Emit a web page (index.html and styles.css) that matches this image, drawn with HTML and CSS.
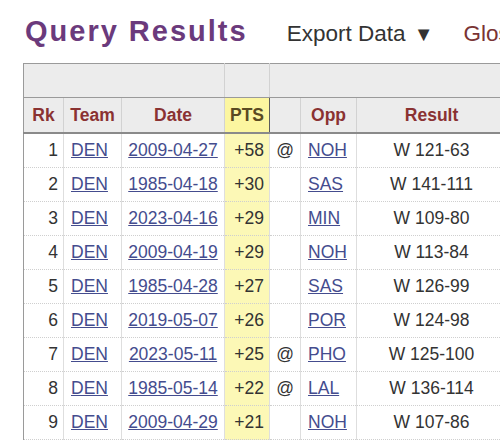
FILE: index.html
```html
<!DOCTYPE html>
<html>
<head>
<meta charset="utf-8">
<link rel="stylesheet" href="styles.css">
</head>
<body>
<div class="page">
  <div class="heading">
    <h1 class="title">Query Results</h1>
    <span class="export">Export Data <span class="caret">▼</span></span>
    <span class="glossary">Glossary</span>
  </div>
  <table class="results">
    <colgroup>
      <col class="c-rk"><col class="c-team"><col class="c-date"><col class="c-pts"><col class="c-at"><col class="c-opp"><col class="c-res">
    </colgroup>
    <thead>
      <tr class="over">
        <th colspan="3"></th>
        <th></th>
        <th colspan="3"></th>
      </tr>
      <tr class="labels">
        <th>Rk</th><th>Team</th><th>Date</th><th class="sorted">PTS</th><th></th><th>Opp</th><th>Result</th>
      </tr>
    </thead>
    <tbody>
      <tr><td class="num">1</td><td class="left"><a href="#">DEN</a></td><td class="center"><a href="#">2009-04-27</a></td><td class="num pts">+58</td><td class="center">@</td><td class="left"><a href="#">NOH</a></td><td class="center">W 121-63</td></tr>
      <tr><td class="num">2</td><td class="left"><a href="#">DEN</a></td><td class="center"><a href="#">1985-04-18</a></td><td class="num pts">+30</td><td class="center"></td><td class="left"><a href="#">SAS</a></td><td class="center">W 141-111</td></tr>
      <tr><td class="num">3</td><td class="left"><a href="#">DEN</a></td><td class="center"><a href="#">2023-04-16</a></td><td class="num pts">+29</td><td class="center"></td><td class="left"><a href="#">MIN</a></td><td class="center">W 109-80</td></tr>
      <tr><td class="num">4</td><td class="left"><a href="#">DEN</a></td><td class="center"><a href="#">2009-04-19</a></td><td class="num pts">+29</td><td class="center"></td><td class="left"><a href="#">NOH</a></td><td class="center">W 113-84</td></tr>
      <tr><td class="num">5</td><td class="left"><a href="#">DEN</a></td><td class="center"><a href="#">1985-04-28</a></td><td class="num pts">+27</td><td class="center"></td><td class="left"><a href="#">SAS</a></td><td class="center">W 126-99</td></tr>
      <tr><td class="num">6</td><td class="left"><a href="#">DEN</a></td><td class="center"><a href="#">2019-05-07</a></td><td class="num pts">+26</td><td class="center"></td><td class="left"><a href="#">POR</a></td><td class="center">W 124-98</td></tr>
      <tr><td class="num">7</td><td class="left"><a href="#">DEN</a></td><td class="center"><a href="#">2023-05-11</a></td><td class="num pts">+25</td><td class="center">@</td><td class="left"><a href="#">PHO</a></td><td class="center">W 125-100</td></tr>
      <tr><td class="num">8</td><td class="left"><a href="#">DEN</a></td><td class="center"><a href="#">1985-05-14</a></td><td class="num pts">+22</td><td class="center">@</td><td class="left"><a href="#">LAL</a></td><td class="center">W 136-114</td></tr>
      <tr><td class="num">9</td><td class="left"><a href="#">DEN</a></td><td class="center"><a href="#">2009-04-29</a></td><td class="num pts">+21</td><td class="center"></td><td class="left"><a href="#">NOH</a></td><td class="center">W 107-86</td></tr>
    </tbody>
  </table>
</div>
</body>
</html>
```

FILE: styles.css
```css
html, body {
  margin: 0;
  padding: 0;
  background: #ffffff;
  overflow: hidden;
}

.page {
  width: 500px;
  height: 440px;
  overflow: hidden;
  font-family: "Liberation Sans", Arial, sans-serif;
  color: #333333;
}

.heading {
  display: flex;
  align-items: baseline;
  white-space: nowrap;
  padding: 14px 0 0 25px;
  height: 49px;
  box-sizing: border-box;
}

.title {
  margin: 0;
  font-size: 29px;
  font-weight: bold;
  letter-spacing: 2px;
  color: #6b3a7c;
  line-height: 34px;
}

.export {
  margin-left: 39px;
  font-size: 22.5px;
  color: #333333;
}

.caret {
  font-size: 20px;
  margin-left: 2px;
}

.glossary {
  margin-left: 30px;
  font-size: 22.5px;
  color: #7a3434;
}

.results {
  margin-left: 23px;
  margin-top: 14px;
  border-collapse: collapse;
  table-layout: fixed;
  width: 483px;
  font-size: 17.5px;
}

.c-rk { width: 40px; }
.c-team { width: 58px; }
.c-date { width: 103px; }
.c-pts { width: 45px; }
.c-at { width: 31px; }
.c-opp { width: 56px; }
.c-res { width: 150px; }

.results th {
  background: #ececec;
  font-weight: bold;
  color: #8a3232;
  text-align: center;
  padding: 0;
  border-left: 1px solid #d2d2d2;
  border-right: 1px solid #d2d2d2;
}

.over th {
  height: 33px;
  border-top: 1px solid #9a9a9a;
  border-bottom: 1px solid #9a9a9a;
}

.labels th {
  height: 34px;
  border-bottom: 2px solid #8a8a8a;
}

.results th:first-child {
  border-left: 1px solid #9a9a9a;
}

.labels th.sorted {
  background: #fcf6a0;
  color: #5a4a22;
  border: 1px solid #5c5c5c;
  border-bottom: 2px solid #8a8a8a;
}

.results td {
  height: 33px;
  padding: 0 6px;
  border-bottom: 1px dotted #cfcfcf;
  border-left: 1px solid #dedede;
  border-right: 1px solid #dedede;
  white-space: nowrap;
  color: #333333;
}

.results td:first-child {
  border-left: 1px solid #9a9a9a;
}

.results td.num {
  text-align: right;
  padding-right: 5px;
}

.results td.left {
  text-align: left;
  padding-left: 7px;
}

.results td.center {
  text-align: center;
  padding: 0 2px;
}

.results td.pts {
  background: #fcf8b6;
}

.results a {
  color: #444c8e;
  text-decoration: underline;
}
```
